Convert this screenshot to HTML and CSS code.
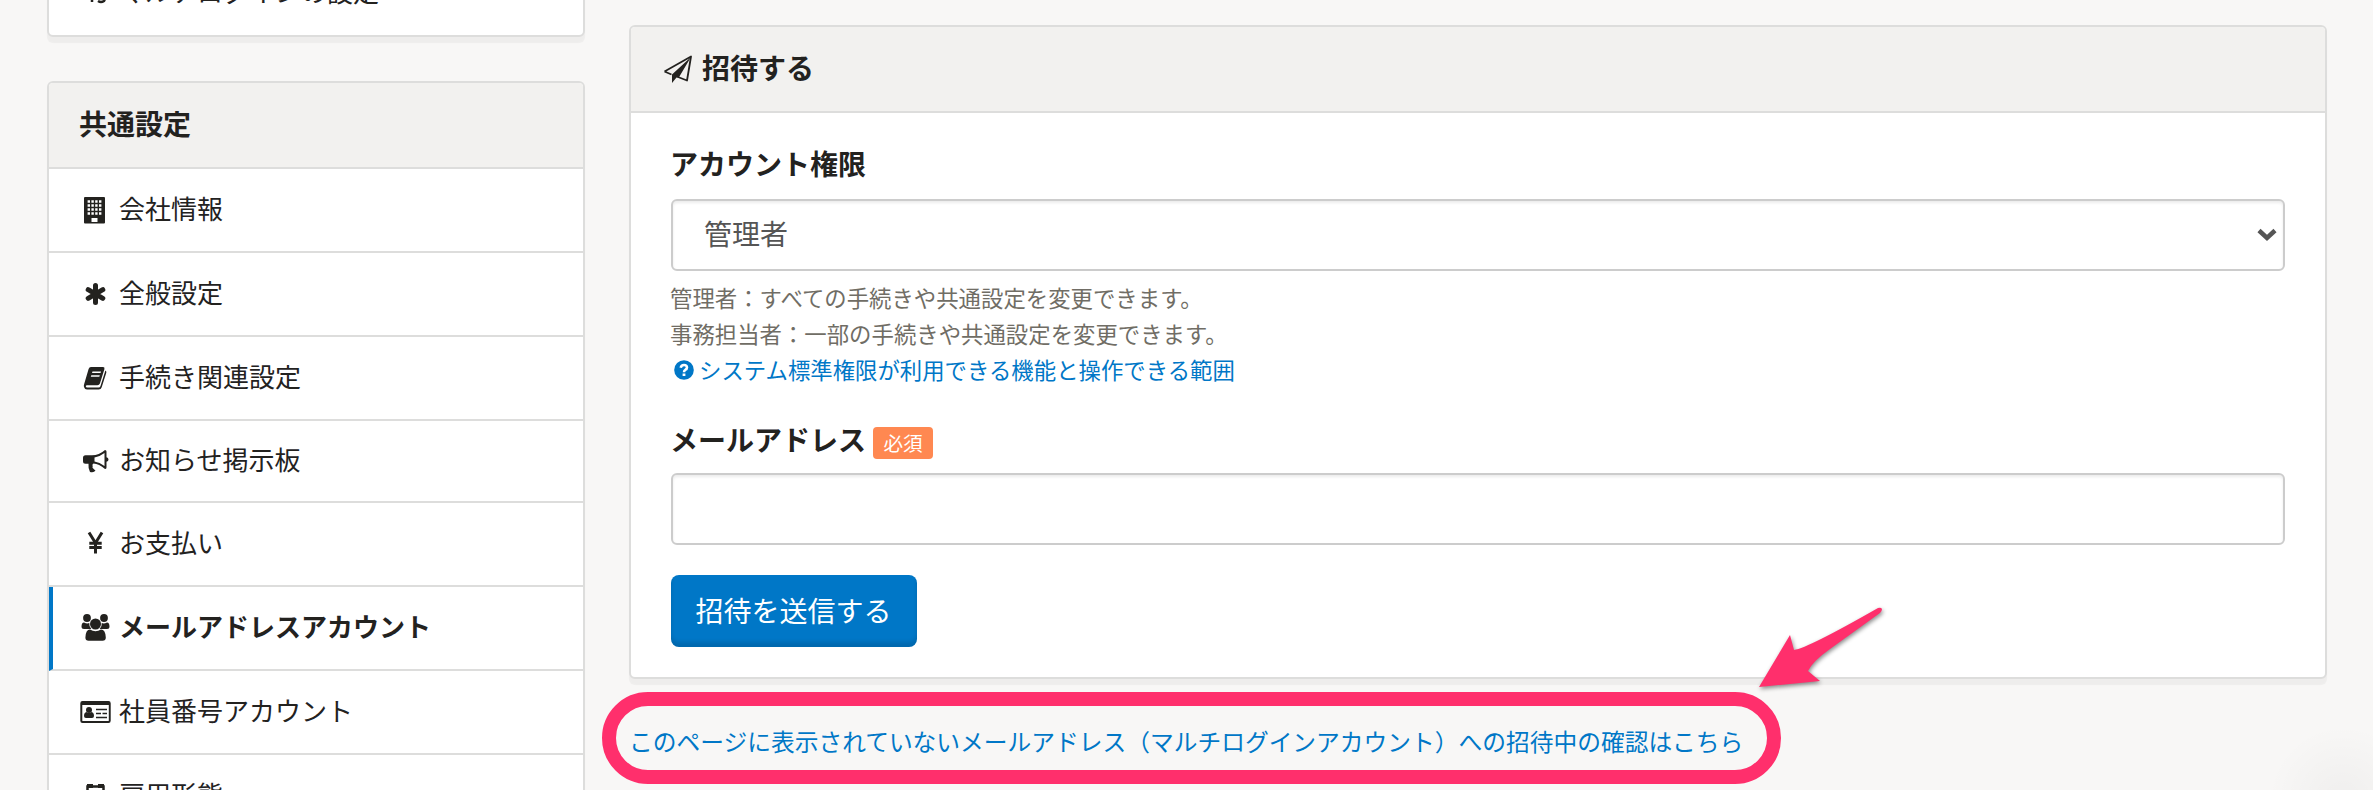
FILE: index.html
```html
<!DOCTYPE html>
<html lang="ja">
<head>
<meta charset="utf-8">
<title>メールアドレスアカウント</title>
<link rel="stylesheet" href="styles.css">
</head>
<body>
<div class="page">
  <aside class="sidebar">
    <div class="card card-prev">
      <div class="item item-cut"><svg class="icon" viewBox="0 0 30 30"><path class="line" d="M12 14v10M18 23q3 2 6 0 2-3 0-7h-5"/></svg><span>マルチログインの設定</span></div>
    </div>
    <nav class="card menu">
      <h2 class="card-head"><span>共通設定</span></h2>
      <a class="item"><svg class="icon" viewBox="0 0 30 30"><path fill-rule="evenodd" d="M5 2h19a1 1 0 0 1 1 1v24.500a1 1 0 0 1-1 1H5a1 1 0 0 1-1-1V3a1 1 0 0 1 1-1zM11.500 23v4h6v-4z"/><path class="windows" d="M7.600 6.500h14M7.600 10.500h14M7.600 14.500h14M7.600 18.500h14"/></svg><span>会社情報</span></a>
      <a class="item"><svg class="icon" viewBox="0 0 30 30"><path class="star" d="M15.500 6.500v17M8.200 10.700l14.600 8.600M22.800 10.700l-14.600 8.600"/></svg><span>全般設定</span></a>
      <a class="item"><svg class="icon" viewBox="0 0 30 30"><path fill-rule="evenodd" d="M11 4h12q2 0 1.400 2.200l-4.500 14.300q-.6 1.800-2.500 1.800H7.200q-1.600 0-1.400 1.200.2 1 1.500 1h11.400q1.300 0 1.700-1.200l5-15.800q1.300.7.900 2.200l-4.600 14.600q-.7 2.200-3 2.200H7Q4.700 26.500 4 24q-.4-1.200.1-2.700L8.600 6Q9.200 4 11 4zM12.500 8.500l-.5 1.500h8.500l.5-1.500zM11.300 12.300l-.5 1.500h8.500l.5-1.500z"/></svg><span>手続き関連設定</span></a>
      <a class="item short"><svg class="icon" viewBox="0 0 30 30"><path fill-rule="evenodd" d="M25 4q1.500 0 1.500 1.600v5.600q2 .5 2 2.300t-2 2.300v5.600q0 1.600-1.500 1.600-6-5-11.500-5.400-1.800 1-.8 2.600-.8 1.500.8 2.500 1 .9 2 1.800-1.500 2.500-5.500 1.500Q8 22 8.500 17.700H5.500Q3 17.700 3 15.200v-3.400Q3 9.300 5.500 9.300H12Q19 9.300 25 4zM24.500 7Q19.500 10.800 14.500 11.500v4Q19.500 16.200 24.500 20z"/></svg><span>お知らせ掲示板</span></a>
      <a class="item"><svg class="icon" viewBox="0 0 30 30"><path class="yen" d="M9 3.500l6.500 10.500L22 3.500M15.500 13V24.500M9.300 14.300h12.400M9.300 18.600h12.400"/></svg><span>お支払い</span></a>
      <a class="item active"><svg class="icon" viewBox="0 0 30 30"><circle cx="7" cy="5" r="3.900"/><circle cx="24" cy="5" r="3.900"/><path d="M4 9.500q3 1.700 5.300.6-.5 3.400 2 6H4q-2.500 0-2.500-2.500Q1.600 9.500 4 9.500zM27 9.500q-3 1.700-5.300.6.500 3.400-2 6H27q2.500 0 2.500-2.500-.1-4.100-2.500-4.100z"/><circle cx="15.500" cy="11" r="5.500"/><path d="M10 16.500q5.500 3.500 11 0 4.500 0 4.800 8 0 3.200-3.200 3.200H8.600q-3.200 0-3.200-3.200.3-8 4.600-8z"/></svg><span>メールアドレスアカウント</span></a>
      <a class="item"><svg class="icon" viewBox="0 0 30 30"><path fill-rule="evenodd" d="M2.500 4h26q2.200 0 2.200 2.200v17.600q0 2.200-2.200 2.200h-26Q.3 26 .3 23.800V6.200Q.3 4 2.500 4zM2.300 8v15.500q0 .6.600.6h25.300q.6 0 .6-.6V8z"/><circle cx="9" cy="13" r="3"/><path d="M6.500 15q2.500 2 5 0 2.500.5 2.500 4 0 2-2 2H6q-2 0-2-2 0-3.500 2.500-4z"/><path class="rules" d="M16 12.500h11M16 16.500h5M22.500 16.500h4.500M16 20.500h11"/></svg><span>社員番号アカウント</span></a>
      <a class="item"><svg class="icon" viewBox="0 0 30 30"><path class="line" d="M7.500 28V5.500h16V28"/><path d="M7 3h6v4H7zM18 3h6v4h-6z"/></svg><span>雇用形態</span></a>
    </nav>
  </aside>
  <main class="main">
    <section class="card">
      <h2 class="card-head invite-head"><svg class="plane" viewBox="0 0 30 30"><path class="plane-line" d="M2.500 17.500L29 2.500 25 26.500 16 23M2.500 17.500l7 3"/><path d="M29 3L10 20.500V29l4.500-5.500 2 .5z"/></svg><span>招待する</span></h2>
      <form class="form">
        <label class="label">アカウント権限</label>
        <div class="control select"><span>管理者</span><svg class="chevron" viewBox="0 0 20 14"><path d="M2 2.500l8 7.500 8-7.500"/></svg></div>
        <div class="hint">管理者：すべての手続きや共通設定を変更できます。<br>事務担当者：一部の手続きや共通設定を変更できます。<br><a class="help"><svg class="help-icon" viewBox="0 0 20 20"><circle cx="10" cy="10" r="9.800"/><path class="question" d="M6.700 7.800Q7.200 5 10 5t3 2.500Q13 9 11.300 9.800 10 10.500 10 12.200"/><path class="dot" d="M8.600 13.500h2.800V16H8.600z"/></svg><span>システム標準権限が利用できる機能と操作できる範囲</span></a></div>
        <label class="label mail-label"><span>メールアドレス</span><span class="badge">必須</span></label>
        <div class="control"></div>
        <button class="submit" type="button">招待を送信する</button>
      </form>
    </section>
    <a class="more">このページに表示されていないメールアドレス（マルチログインアカウント）への招待中の確認はこちら</a>
  </main>
</div>
<div class="glow"></div>
<div class="ring"></div>
<svg class="arrow" viewBox="0 0 140 100"><path d="M9 87L40 35l4 15Q58 48 128 8q3-1 4 1 0 2-2 4L80 49Q63 61 58 71l12 10z"/></svg>
</body>
</html>
```
FILE: styles.css
```css
* { box-sizing: border-box; }
body {
  margin: 0;
  width: 2373px;
  height: 790px;
  overflow: hidden;
  position: relative;
  background: #f8f7f6;
  color: #23221f;
  font-family: "Noto Sans CJK JP", sans-serif;
  font-size: 26px;
}
h2 { margin: 0; }
.page { display: flex; gap: 44px; padding-left: 47px; height: 790px; overflow: hidden; }
.sidebar { width: 538px; flex: none; }
.card {
  background: #fff;
  border: 2px solid #dddddc;
  border-radius: 6px;
  box-shadow: 0 6px 1px rgba(0, 0, 0, .04);
}
.card-prev { height: 65px; margin: -28px 0 44px; }
.card-head {
  height: 86px;
  padding: 0 30px;
  background: #f2f1ef;
  border-bottom: 2px solid #dddddc;
  border-radius: 4px 4px 0 0;
  font-size: 28px;
  font-weight: 700;
  line-height: 81px;
}
.item {
  display: flex;
  align-items: center;
  gap: 9px;
  height: 84px;
  padding: 0 0 0 31px;
  border-bottom: 2px solid #dddddc;
  line-height: 40px;
}
.item > span { position: relative; top: -2px; }
.item.short { height: 82px; }
.item-cut { height: 38px; border: 0; }
.item.active { padding-left: 27px; border-left: 4px solid #0077c7; font-weight: 700; }
.icon { width: 30px; height: 30px; flex: none; fill: #23221f; overflow: visible; }
.line { fill: none; stroke: #23221f; stroke-width: 2.5; }
.windows { stroke: #fff; stroke-width: 2.5; stroke-dasharray: 2.400 1.400; }
.star { stroke: #23221f; stroke-width: 5; stroke-linecap: round; }
.yen { fill: none; stroke: #23221f; stroke-width: 3; }
.rules { stroke: #23221f; stroke-width: 1.700; }
.main { width: 1698px; flex: none; padding-top: 25px; }
.main .card { height: 654px; }
.invite-head { display: flex; align-items: center; gap: 10px; padding-left: 31px; }
.plane { width: 30px; height: 30px; overflow: visible; fill: #23221f; }
.invite-head span { margin-top: -3px; }
.plane-line { fill: none; stroke: #23221f; stroke-width: 1.800; stroke-linejoin: round; }
.form { padding: 30px 40px 0; }
.label { display: block; height: 44px; margin-left: -1px; font-size: 28px; line-height: 40px; font-weight: 700; }
.form .label:first-child { height: 56px; }
.control {
  display: flex;
  align-items: center;
  justify-content: space-between;
  height: 72px;
  padding: 0 6px 0 31px;
  border: 2px solid #ccc;
  border-radius: 6px;
  background: #fff;
  box-shadow: inset 0 2px 3px rgba(0, 0, 0, .08);
  color: #555;
  font-size: 28px;
}
.control > span { position: relative; top: -2px; }
.chevron { width: 20px; height: 14px; fill: none; stroke: #555; stroke-width: 4.500; }
.hint { height: 148px; padding-top: 8px; margin-left: -1px; color: #706d65; font-size: 22.4px; line-height: 36px; }
.help { display: flex; align-items: center; gap: 5px; padding-left: 4px; color: #0077c7; }
.help-icon { width: 20px; height: 20px; margin-top: 2px; fill: #0077c7; }
.question { fill: none; stroke: #fff; stroke-width: 2.600; }
.dot { fill: #fff; }
.mail-label { display: flex; height: 54px; gap: 7px; }
.badge {
  width: 60px;
  height: 32px;
  margin-top: 8px;
  border-radius: 4px;
  background: #ff8851;
  color: #fff;
  font-size: 19.6px;
  font-weight: 400;
  line-height: 32px;
  text-align: center;
}
.submit {
  display: block;
  width: 246px;
  height: 72px;
  margin-top: 30px;
  padding: 0 1px 3px 0;
  border: 0;
  border-radius: 8px;
  background: #0077c7;
  box-shadow: inset 0 -5px 4px rgba(0, 0, 0, .13);
  color: #fff;
  font: 28px "Noto Sans CJK JP", sans-serif;
}
.more { display: block; padding-top: 42px; color: #0077c7; font-size: 23.74px; line-height: 40px; white-space: nowrap; }
.ring {
  position: absolute;
  left: 602px;
  top: 692px;
  width: 1179px;
  height: 92px;
  border: 14px solid #ff2f6c;
  border-radius: 46px;
}
.arrow {
  position: absolute;
  left: 1750px;
  top: 600px;
  width: 140px;
  height: 100px;
  fill: #ff2f6c;
  filter: drop-shadow(1px 2px 2px rgba(0, 0, 0, .45));
}
.glow {
  position: absolute;
  right: 0;
  bottom: 0;
  width: 120px;
  height: 60px;
  background: radial-gradient(circle at 90px 70px, rgba(0, 0, 0, .035), rgba(0, 0, 0, 0) 75px);
}
```
